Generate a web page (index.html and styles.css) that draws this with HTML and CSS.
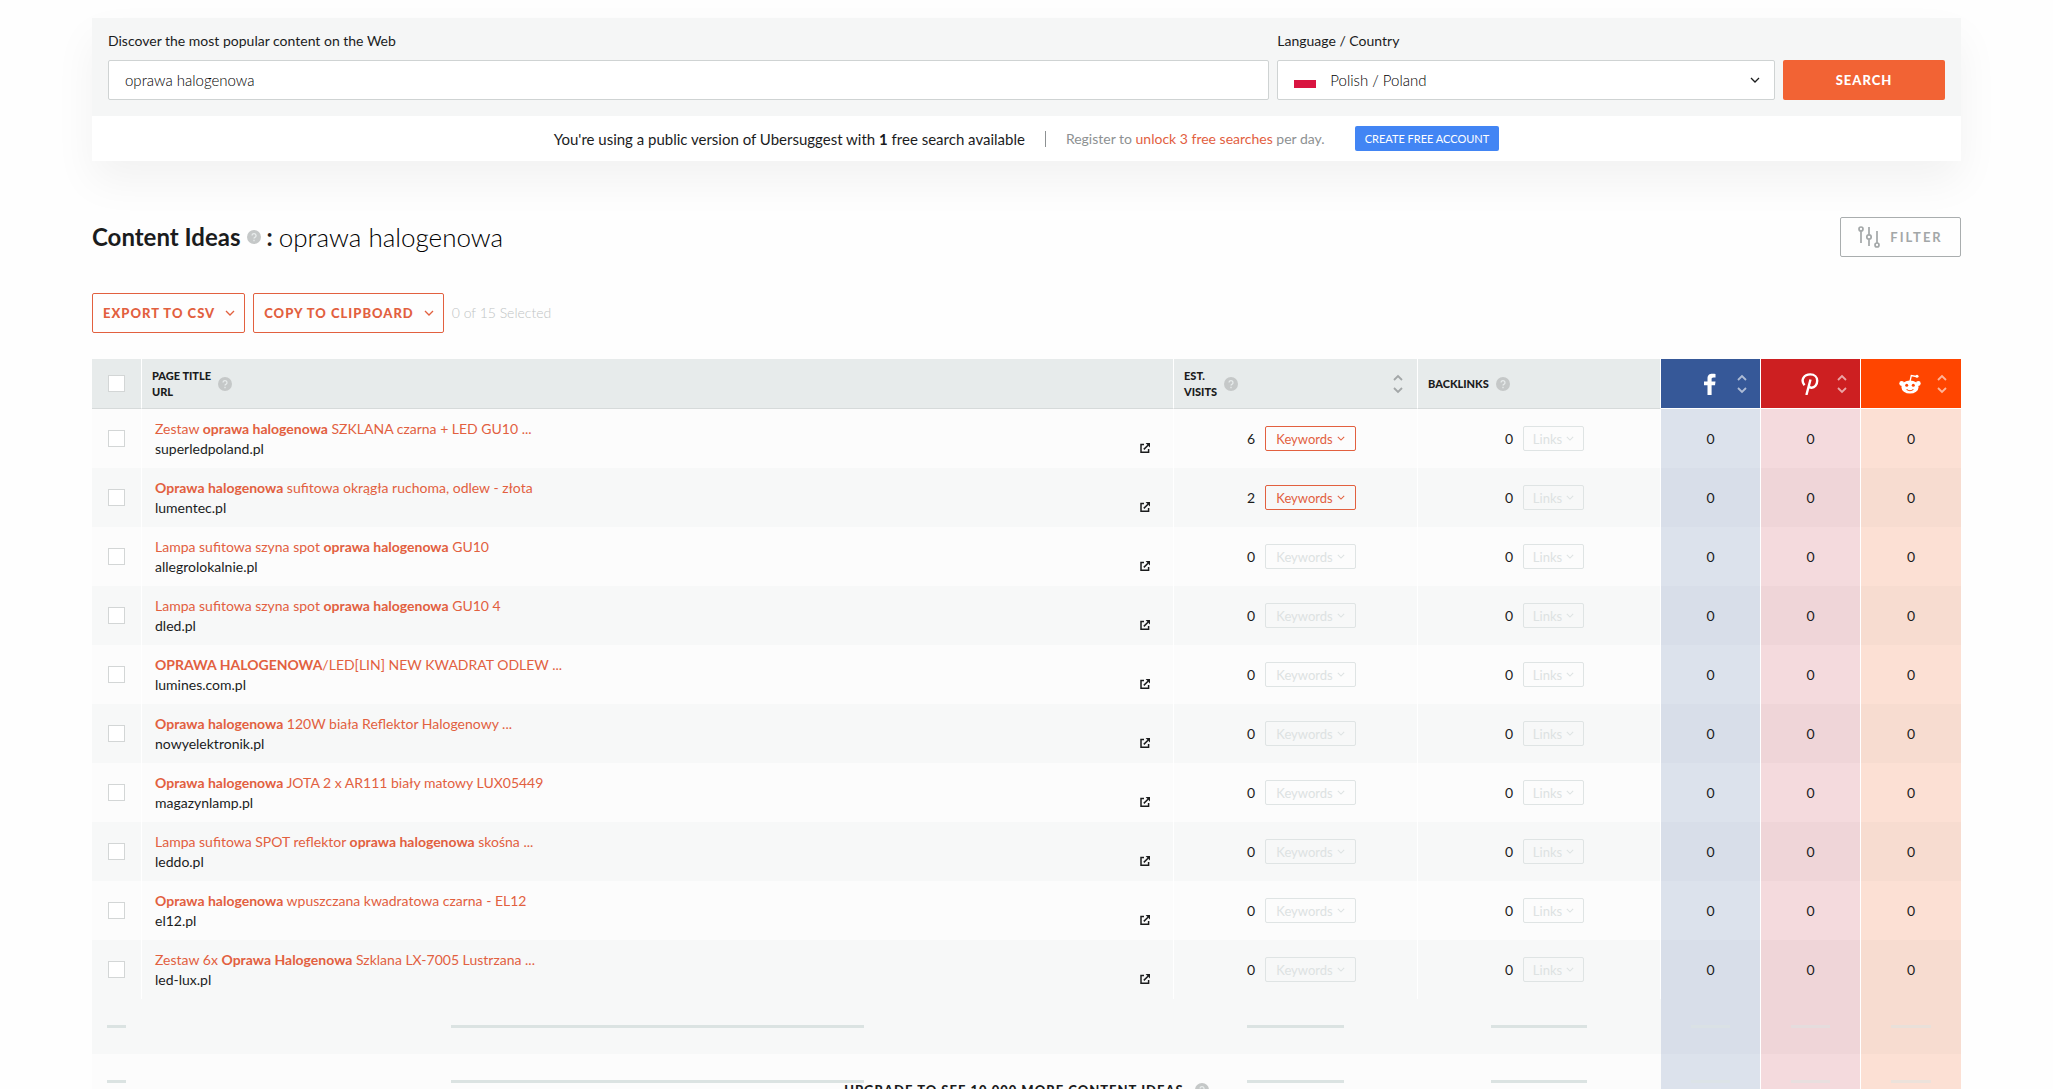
FILE: index.html
```html
<!DOCTYPE html>
<html lang="en">
<head>
<meta charset="utf-8">
<title>Content Ideas: oprawa halogenowa</title>
<link rel="stylesheet" href="styles.css">
</head>
<body>
<svg class="sprite" aria-hidden="true">
  <symbol id="chev" viewBox="0 0 10 6"><path d="M1 1l4 4 4-4" fill="none" stroke="currentColor" stroke-width="1.3"/></symbol>
  <symbol id="sort" viewBox="0 0 10 20"><path d="M1 6l4-4 4 4M1 14l4 4 4-4" fill="none" stroke="currentColor" stroke-width="1.8"/></symbol>
  <symbol id="help" viewBox="0 0 14 14"><circle cx="7" cy="7" r="7" fill="#c5c8c8"/><path d="M5 5.6a2 2 0 1 1 2.900 1.800c-.6.3-.9.6-.9 1.200M7 9.800v1.400" fill="none" stroke="#e7ebeb" stroke-width="1.300"/></symbol>
  <symbol id="ext" viewBox="0 0 10 10"><path d="M4 1.6H1v7.6h7.6V6M3.8 6.4L8 2.2" fill="none" stroke="currentColor" stroke-width="1.5"/><path d="M5.6 0H10v4.4z" fill="currentColor"/></symbol>
  <symbol id="tune" viewBox="0 0 22 22"><g fill="none" stroke="currentColor" stroke-width="1.7"><path d="M3 5v12M11 1v7.600M11 13.400V20M19 5v12"/><circle cx="3" cy="3" r="2"/><circle cx="11" cy="11" r="2.200"/><circle cx="19" cy="19" r="2"/></g></symbol>
</svg>
<main class="app">
  <section class="panel">
    <form class="search">
      <div class="field field-term">
        <label for="term">Discover the most popular content on the Web</label>
        <input id="term" class="control" type="text" value="oprawa halogenowa">
      </div>
      <div class="field field-lang">
        <label for="lang">Language / Country</label>
        <div class="select">
          <select id="lang" class="control"><option>Polish / Poland</option></select>
          <span class="flag"></span>
          <svg class="select-chev"><use href="#chev"/></svg>
        </div>
      </div>
      <button class="submit" type="button">SEARCH</button>
    </form>
    <div class="notice">
      <span>You're using a public version of Ubersuggest with <b>1</b> free search available</span>
      <span class="rule"></span>
      <span class="muted">Register to <a href="#">unlock 3 free searches</a> per day.</span>
      <button class="create" type="button">CREATE FREE ACCOUNT</button>
    </div>
  </section>

  <header class="title-row">
    <h1><b>Content Ideas</b><svg class="help"><use href="#help"/></svg><b>:</b><span>oprawa halogenowa</span></h1>
    <button class="filter" type="button"><svg><use href="#tune"/></svg>FILTER</button>
  </header>

  <div class="actions">
    <button class="outline" type="button">EXPORT TO CSV<svg><use href="#chev"/></svg></button>
    <button class="outline" type="button">COPY TO CLIPBOARD<svg><use href="#chev"/></svg></button>
    <span class="count">0 of 15 Selected</span>
  </div>

  <section class="results">
    <table>
      <colgroup><col class="c-check"><col><col class="c-visits"><col class="c-links"><col class="c-soc"><col class="c-soc"><col class="c-soc"></colgroup>
      <thead>
        <tr>
          <th><input type="checkbox" aria-label="Select all"></th>
          <th><div class="head"><span>PAGE TITLE<br>URL</span><svg class="help"><use href="#help"/></svg></div></th>
          <th><div class="head"><span>EST.<br>VISITS</span><svg class="help"><use href="#help"/></svg><svg class="sort"><use href="#sort"/></svg></div></th>
          <th><div class="head"><span>BACKLINKS</span><svg class="help"><use href="#help"/></svg></div></th>
          <th class="fb"><div class="soc"><svg class="brand" viewBox="0 0 22 22"><path fill="#fff" d="M8.500 22V12.300H5V8.400h3.500V5.400C8.500 2 10.500.8 13.400.8c1.300 0 2.300.1 3.100.2v3.600h-2c-1.600 0-1.900.8-1.900 1.800v2h3.900l-.5 3.900h-3.400V22z"/></svg><svg class="sort"><use href="#sort"/></svg></div></th>
          <th class="pin"><div class="soc"><svg class="brand" viewBox="0 0 22 22"><path fill="none" stroke="#fff" stroke-width="2.400" d="M5.500 12.200C1.200 7 5 1.400 11.300 1.400c4.400 0 6.900 2.800 6.900 6.300 0 4.300-2.700 7-5.500 7-1.500 0-2.600-.7-2.900-1.800M11.500 6.500L7.400 22"/></svg><svg class="sort"><use href="#sort"/></svg></div></th>
          <th class="red"><div class="soc"><svg class="brand" viewBox="0 0 22 22"><path fill="none" stroke="#fff" stroke-width="1.300" d="M11 8.500l1.300-6 5 1"/><circle cx="18" cy="3.300" r="1.500" fill="#fff"/><circle cx="2.700" cy="10.500" r="2.400" fill="#fff"/><circle cx="19.300" cy="10.500" r="2.400" fill="#fff"/><ellipse cx="11" cy="14" rx="8.600" ry="6.600" fill="#fff"/><circle cx="7.700" cy="12.200" r="1.500" fill="#ff4500"/><circle cx="14.300" cy="12.200" r="1.500" fill="#ff4500"/><path fill="none" stroke="#ff4500" stroke-width="1.100" d="M7.600 16.400c2 1.600 4.800 1.600 6.800 0"/></svg><svg class="sort"><use href="#sort"/></svg></div></th>
        </tr>
      </thead>
      <tbody>
        <tr><td><input type="checkbox" aria-label="Select row"></td><td><div class="page"><div><a href="#">Zestaw <b>oprawa halogenowa</b> SZKLANA czarna + LED GU10 ...</a><p>superledpoland.pl</p></div><svg><use href="#ext"/></svg></div></td><td><div class="num est"><span>6</span><button type="button">Keywords<svg><use href="#chev"/></svg></button></div></td><td><div class="num back"><span>0</span><button type="button" disabled>Links<svg><use href="#chev"/></svg></button></div></td><td class="fb">0</td><td class="pin">0</td><td class="red">0</td></tr>
        <tr><td><input type="checkbox" aria-label="Select row"></td><td><div class="page"><div><a href="#"><b>Oprawa halogenowa</b> sufitowa okrągła ruchoma, odlew - złota</a><p>lumentec.pl</p></div><svg><use href="#ext"/></svg></div></td><td><div class="num est"><span>2</span><button type="button">Keywords<svg><use href="#chev"/></svg></button></div></td><td><div class="num back"><span>0</span><button type="button" disabled>Links<svg><use href="#chev"/></svg></button></div></td><td class="fb">0</td><td class="pin">0</td><td class="red">0</td></tr>
        <tr><td><input type="checkbox" aria-label="Select row"></td><td><div class="page"><div><a href="#">Lampa sufitowa szyna spot <b>oprawa halogenowa</b> GU10</a><p>allegrolokalnie.pl</p></div><svg><use href="#ext"/></svg></div></td><td><div class="num est"><span>0</span><button type="button" disabled>Keywords<svg><use href="#chev"/></svg></button></div></td><td><div class="num back"><span>0</span><button type="button" disabled>Links<svg><use href="#chev"/></svg></button></div></td><td class="fb">0</td><td class="pin">0</td><td class="red">0</td></tr>
        <tr><td><input type="checkbox" aria-label="Select row"></td><td><div class="page"><div><a href="#">Lampa sufitowa szyna spot <b>oprawa halogenowa</b> GU10 4</a><p>dled.pl</p></div><svg><use href="#ext"/></svg></div></td><td><div class="num est"><span>0</span><button type="button" disabled>Keywords<svg><use href="#chev"/></svg></button></div></td><td><div class="num back"><span>0</span><button type="button" disabled>Links<svg><use href="#chev"/></svg></button></div></td><td class="fb">0</td><td class="pin">0</td><td class="red">0</td></tr>
        <tr><td><input type="checkbox" aria-label="Select row"></td><td><div class="page"><div><a href="#"><b>OPRAWA HALOGENOWA</b>/LED[LIN] NEW KWADRAT ODLEW ...</a><p>lumines.com.pl</p></div><svg><use href="#ext"/></svg></div></td><td><div class="num est"><span>0</span><button type="button" disabled>Keywords<svg><use href="#chev"/></svg></button></div></td><td><div class="num back"><span>0</span><button type="button" disabled>Links<svg><use href="#chev"/></svg></button></div></td><td class="fb">0</td><td class="pin">0</td><td class="red">0</td></tr>
        <tr><td><input type="checkbox" aria-label="Select row"></td><td><div class="page"><div><a href="#"><b>Oprawa halogenowa</b> 120W biała Reflektor Halogenowy ...</a><p>nowyelektronik.pl</p></div><svg><use href="#ext"/></svg></div></td><td><div class="num est"><span>0</span><button type="button" disabled>Keywords<svg><use href="#chev"/></svg></button></div></td><td><div class="num back"><span>0</span><button type="button" disabled>Links<svg><use href="#chev"/></svg></button></div></td><td class="fb">0</td><td class="pin">0</td><td class="red">0</td></tr>
        <tr><td><input type="checkbox" aria-label="Select row"></td><td><div class="page"><div><a href="#"><b>Oprawa halogenowa</b> JOTA 2 x AR111 biały matowy LUX05449</a><p>magazynlamp.pl</p></div><svg><use href="#ext"/></svg></div></td><td><div class="num est"><span>0</span><button type="button" disabled>Keywords<svg><use href="#chev"/></svg></button></div></td><td><div class="num back"><span>0</span><button type="button" disabled>Links<svg><use href="#chev"/></svg></button></div></td><td class="fb">0</td><td class="pin">0</td><td class="red">0</td></tr>
        <tr><td><input type="checkbox" aria-label="Select row"></td><td><div class="page"><div><a href="#">Lampa sufitowa SPOT reflektor <b>oprawa halogenowa</b> skośna ...</a><p>leddo.pl</p></div><svg><use href="#ext"/></svg></div></td><td><div class="num est"><span>0</span><button type="button" disabled>Keywords<svg><use href="#chev"/></svg></button></div></td><td><div class="num back"><span>0</span><button type="button" disabled>Links<svg><use href="#chev"/></svg></button></div></td><td class="fb">0</td><td class="pin">0</td><td class="red">0</td></tr>
        <tr><td><input type="checkbox" aria-label="Select row"></td><td><div class="page"><div><a href="#"><b>Oprawa halogenowa</b> wpuszczana kwadratowa czarna - EL12</a><p>el12.pl</p></div><svg><use href="#ext"/></svg></div></td><td><div class="num est"><span>0</span><button type="button" disabled>Keywords<svg><use href="#chev"/></svg></button></div></td><td><div class="num back"><span>0</span><button type="button" disabled>Links<svg><use href="#chev"/></svg></button></div></td><td class="fb">0</td><td class="pin">0</td><td class="red">0</td></tr>
        <tr><td><input type="checkbox" aria-label="Select row"></td><td><div class="page"><div><a href="#">Zestaw 6x <b>Oprawa Halogenowa</b> Szklana LX-7005 Lustrzana ...</a><p>led-lux.pl</p></div><svg><use href="#ext"/></svg></div></td><td><div class="num est"><span>0</span><button type="button" disabled>Keywords<svg><use href="#chev"/></svg></button></div></td><td><div class="num back"><span>0</span><button type="button" disabled>Links<svg><use href="#chev"/></svg></button></div></td><td class="fb">0</td><td class="pin">0</td><td class="red">0</td></tr>
      </tbody>
      <tbody class="locked">
        <tr><td><i></i></td><td><i></i></td><td><i></i></td><td><i></i></td><td class="fb"><i></i></td><td class="pin"><i></i></td><td class="red"><i></i></td></tr>
        <tr><td><i></i></td><td><i></i></td><td><i></i></td><td><i></i></td><td class="fb"><i></i></td><td class="pin"><i></i></td><td class="red"><i></i></td></tr>
        <tr><td><i></i></td><td><i></i></td><td><i></i></td><td><i></i></td><td class="fb"><i></i></td><td class="pin"><i></i></td><td class="red"><i></i></td></tr>
      </tbody>
    </table>
    <p class="upgrade">UPGRADE TO SEE 10,000 MORE CONTENT IDEAS<svg class="help"><use href="#help"/></svg></p>
  </section>
</main>
</body>
</html>
```
FILE: styles.css
```css
* { box-sizing: border-box; }
body { margin: 0; background: #fefefe; color: #1b1c1d; font: 14px/20px Lato, "Noto Sans", sans-serif; }
button, input, select { font: inherit; color: inherit; margin: 0; }
button { cursor: pointer; padding: 0; }
a { color: #e2603f; text-decoration: none; }
p, h1 { margin: 0; }
b { font-weight: 700; }
svg { display: block; flex: none; }
.sprite { position: absolute; width: 0; height: 0; }
.app { height: 100vh; overflow-y: auto; scrollbar-width: none; padding: 18px 92px 0; }

.panel { box-shadow: 0 20px 40px rgba(0, 0, 0, .05); background: #fff; }
.search { display: flex; gap: 8px; align-items: flex-end; padding: 13px 16px 16px; background: #f5f6f6; }
.field { display: flex; flex-direction: column; gap: 9px; flex-basis: 0; }
.field-term { flex-grow: 7; }
.field-lang { flex-grow: 3; }
.control { display: block; width: 100%; height: 40px; border: 1px solid #cfd3d3; border-radius: 2px; background: #fff; padding: 0 16px; appearance: none; font-size: 15px; font-weight: 300; color: #000; }
.select { position: relative; }
.select .control { padding-left: 52px; }
.flag { position: absolute; left: 17px; top: 12px; width: 22px; height: 16px; background: linear-gradient(#fff 50%, #d91440 50%); }
.select-chev { position: absolute; right: 15px; top: 17px; width: 10px; height: 6px; }
.submit { width: 162px; height: 40px; border: 0; border-radius: 2px; background: #f26334; color: #fff; font-size: 13px; font-weight: 900; letter-spacing: 1px; }
.notice { display: flex; justify-content: center; align-items: center; height: 45px; font-size: 15px; }
.rule { width: 1px; height: 16px; margin: 0 20px; background: #8d9192; }
.muted { color: #8d9192; font-size: 14px; }
.create { height: 25px; margin-left: 30px; padding: 0 10px; border: 0; border-radius: 2px; background: #4285f4; color: #fff; font-size: 11px; }

.title-row { display: flex; justify-content: space-between; align-items: center; margin-top: 56px; }
h1 { display: flex; align-items: center; gap: 6px; font-size: 24px; line-height: 32px; font-weight: 300; }
h1 span { font-size: 26px; color: #000; }
.help { width: 14px; height: 14px; }
.filter { display: flex; align-items: center; justify-content: center; gap: 10px; width: 121px; height: 40px; border: 1px solid #a9adae; border-radius: 2px; background: none; color: #a3a7a8; font-size: 13px; font-weight: 700; letter-spacing: 2px; }
.filter svg { width: 22px; height: 22px; }

.actions { display: flex; align-items: center; gap: 8px; margin: 36px 0 26px; }
.outline { display: flex; align-items: center; gap: 10px; height: 40px; padding: 0 9px 0 10px; border: 1px solid #e2603f; border-radius: 2px; background: none; color: #e2603f; font-size: 13px; font-weight: 900; letter-spacing: 1px; }
.outline svg { width: 10px; height: 6px; }
.count { color: #c0c4c4; font-weight: 300; }

.results { position: relative; }
table { width: 100%; table-layout: fixed; border-collapse: separate; border-spacing: 0; }
.c-check { width: 50px; }
.c-visits { width: 244px; }
.c-links { width: 243px; }
.c-soc { width: 100px; }
th { height: 50px; padding: 0; background: #e7ebeb; border-bottom: 1px solid #d6dada; border-right: 1px solid #fff; text-align: center; font-size: 11px; line-height: 16px; font-weight: 900; }
td { height: 59px; padding: 0; border-right: 1px solid #fff; text-align: center; }
th:last-child, td:last-child { border-right: 0; }
tr:nth-child(odd) td { background: #fcfcfc; }
tr:nth-child(even) td { background: #f7f8f8; }
input[type="checkbox"] { appearance: none; display: block; width: 17px; height: 17px; margin: 0 auto; border: 1px solid #d3d6d6; background: #fff; }
.head { display: flex; align-items: center; gap: 7px; padding: 0 14px 0 10px; text-align: left; }
.sort { width: 10px; height: 20px; margin-left: auto; color: #a3a7a8; }
.soc { display: grid; grid-template-columns: 1fr 22px 1fr; align-items: center; padding-right: 2px; }
.brand { grid-column: 2; width: 22px; height: 22px; }
.soc .sort { margin: 0 0 0 16px; color: #fff9; }
th.fb { background: #365898; }
th.pin { background: #cd1f21; }
th.red { background: #ff4500; }
th.fb, th.pin, th.red { border-bottom-color: #fff; }
tr:nth-child(odd) td.fb { background: #dce2ec; }
tr:nth-child(even) td.fb { background: #d8dee9; }
tr:nth-child(odd) td.pin { background: #f4dadd; }
tr:nth-child(even) td.pin { background: #efd5d8; }
tr:nth-child(odd) td.red { background: #fce0d4; }
tr:nth-child(even) td.red { background: #f7dcd0; }
.page { display: flex; justify-content: space-between; align-items: flex-end; padding: 0 23px 0 13px; text-align: left; }
.page a { display: block; }
.page svg { width: 10px; height: 10px; margin-bottom: 6px; }
.num { display: grid; grid-template-columns: 81px max-content; gap: 10px; align-items: center; text-align: right; }
.back { grid-template-columns: 95px max-content; }
.num button { display: flex; align-items: center; justify-content: center; gap: 4px; width: 91px; height: 25px; border: 1px solid #e2603f; border-radius: 2px; background: none; color: #e2603f; font-size: 13px; }
.num svg { width: 8px; height: 5px; }
.back button { width: 61px; }
.num button:disabled { border-color: #dfe4e4; color: #dde2e2; }

.locked td { height: 55px; border-right-color: transparent; }
.locked i { display: block; width: 40%; height: 3px; margin: 0 auto; background: #dbe3e2; }
.locked tr:nth-child(odd) td { background-color: #f7f8f8; }
.locked tr:nth-child(even) td { background-color: #fcfcfc; }
.locked tr:nth-child(odd) td.fb { background: #d8dee9; }
.locked tr:nth-child(even) td.fb { background: #dce2ec; }
.locked tr:nth-child(odd) td.pin { background: #efd5d8; }
.locked tr:nth-child(even) td.pin { background: #f4dadd; }
.locked tr:nth-child(odd) td.red { background: #f7dcd0; }
.locked tr:nth-child(even) td.red { background: #fce0d4; }
.locked .fb, .locked .pin { border-right-color: #fff; }
.locked .fb i, .locked .pin i, .locked .red i { opacity: .5; }
.upgrade { position: absolute; left: 0; right: 0; bottom: 64px; display: flex; justify-content: center; align-items: center; gap: 11px; font-size: 13px; font-weight: 900; letter-spacing: 1px; }
```
